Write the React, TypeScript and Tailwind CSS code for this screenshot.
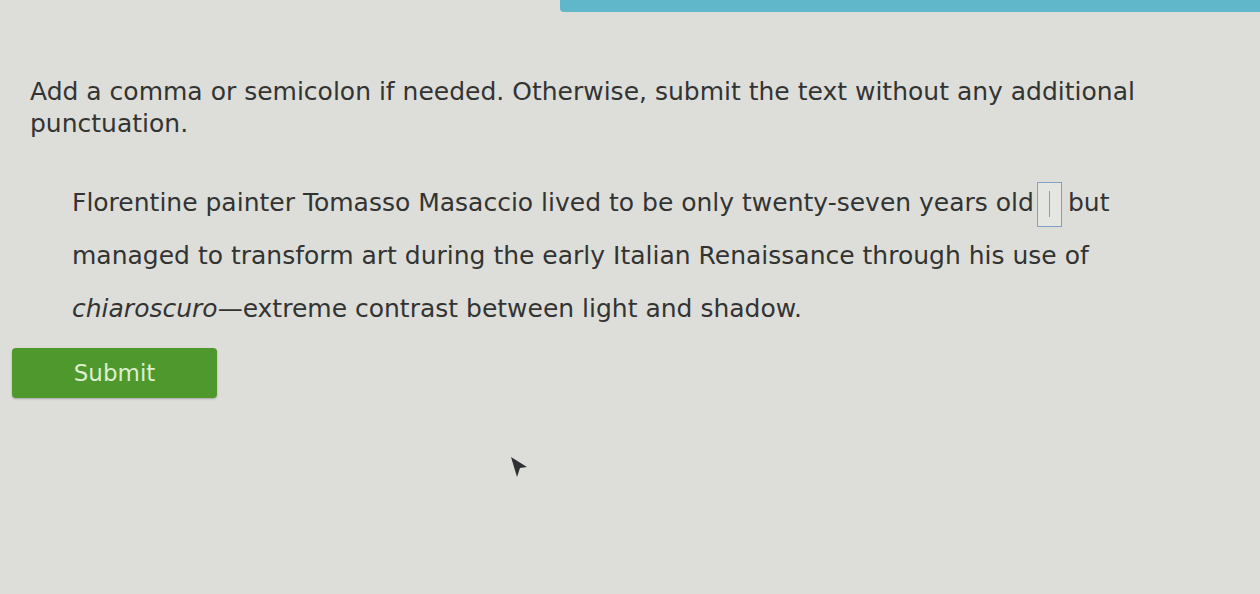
export default function App() {
  const font = { fontFamily: '"DejaVu Sans", Verdana, sans-serif' };

  return (
    <div
      className="relative min-h-screen w-full overflow-hidden bg-[#dddeda] text-[#333432]"
      style={font}
    >
      {/* top header strip */}
      <div className="flex justify-end">
        <div className="h-[12px] w-[700px] rounded-bl-[4px] bg-[#5fb7c9]" />
      </div>

      <div className="px-[30px]">
        <p className="mt-[64px] text-[25px] leading-[32px]">
          Add a comma or semicolon if needed. Otherwise, submit the text without any additional
          <br />
          punctuation.
        </p>

        <p className="ml-[42px] mt-[36px] w-[1140px] text-[25px] leading-[53px]">
          Florentine painter Tomasso Masaccio lived to be only twenty-seven years old
          <span className="ml-[3px] mr-[6px] inline-flex h-[45px] w-[25px] items-center justify-center border border-[#7f9fc6] bg-[#e4e6e2] align-middle">
            <span className="h-[26px] w-px bg-[#9a9a9a]" />
          </span>
          but
          <br />
          managed to transform art during the early Italian Renaissance through his use of
          <br />
          <i>chiaroscuro</i>—extreme contrast between light and shadow.
        </p>
      </div>

      <button className="ml-[12px] mt-[13px] flex h-[50px] w-[205px] items-center justify-center rounded-[4px] bg-[#4f982e] text-[23px] text-[#dcefcf] shadow-[0_1px_2px_rgba(0,0,0,0.25)]">
        Submit
      </button>

      {/* mouse pointer */}
      <svg
        className="absolute left-[508px] top-[455px]"
        width="22"
        height="26"
        viewBox="0 0 22 26"
      >
        <path d="M3 2 L19 12 L12 13 L9 22 Z" fill="#2f3133" />
      </svg>
    </div>
  );
}
